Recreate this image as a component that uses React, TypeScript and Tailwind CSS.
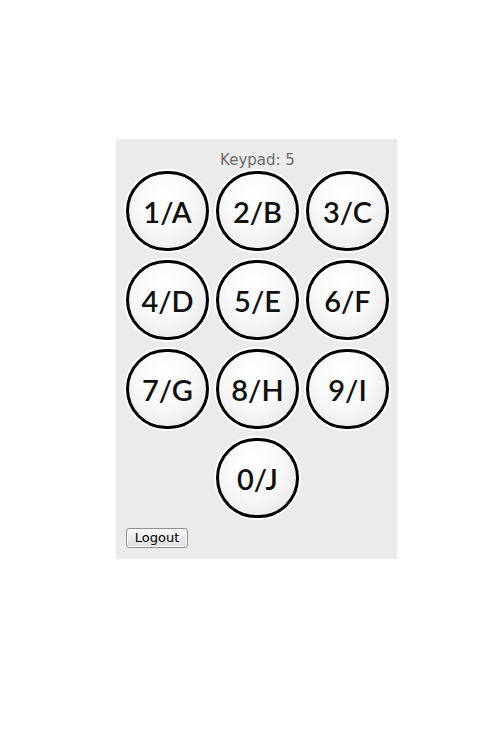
const keys = ['1/A', '2/B', '3/C', '4/D', '5/E', '6/F', '7/G', '8/H', '9/I'];

function Key({ label }: { label: string }) {
  return (
    <button className="w-[83px] h-[80px] rounded-full border-[3px] border-black bg-[radial-gradient(ellipse_at_45%_30%,#ffffff_0%,#f9f9f9_45%,#e2e2e2_100%)] shadow-[0_0_0_2px_#ffffff] flex items-center justify-center text-[29px] font-semibold text-[#111] font-['Lato',sans-serif] leading-none">
      {label}
    </button>
  );
}

export default function App() {
  return (
    <div className="w-[500px] h-[750px] bg-white overflow-hidden">
      <div className="ml-[116px] mt-[139px] w-[281px] h-[420px] bg-[#ebebeb] pt-[12px] pl-[10px] flex flex-col">
        <div className="w-[263px] text-center text-[15px] leading-[18px] text-[#6b6b6b] font-['DejaVu_Sans',sans-serif]">
          Keypad: 5
        </div>
        <div className="mt-[2px] grid grid-cols-[83px_83px_83px] gap-x-[7px] gap-y-[9px]">
          {keys.map((k) => (
            <Key key={k} label={k} />
          ))}
          <div />
          <Key label="0/J" />
        </div>
        <div className="mt-[6px]">
          <button className="h-[20px] w-[62px] rounded-[3px] border border-[#8e8e8e] bg-[linear-gradient(#fafafa,#dcdcdc)] text-[13px] leading-none text-black font-['DejaVu_Sans',sans-serif] shadow-[inset_0_0_0_1px_#ffffff]">
            Logout
          </button>
        </div>
      </div>
    </div>
  );
}
